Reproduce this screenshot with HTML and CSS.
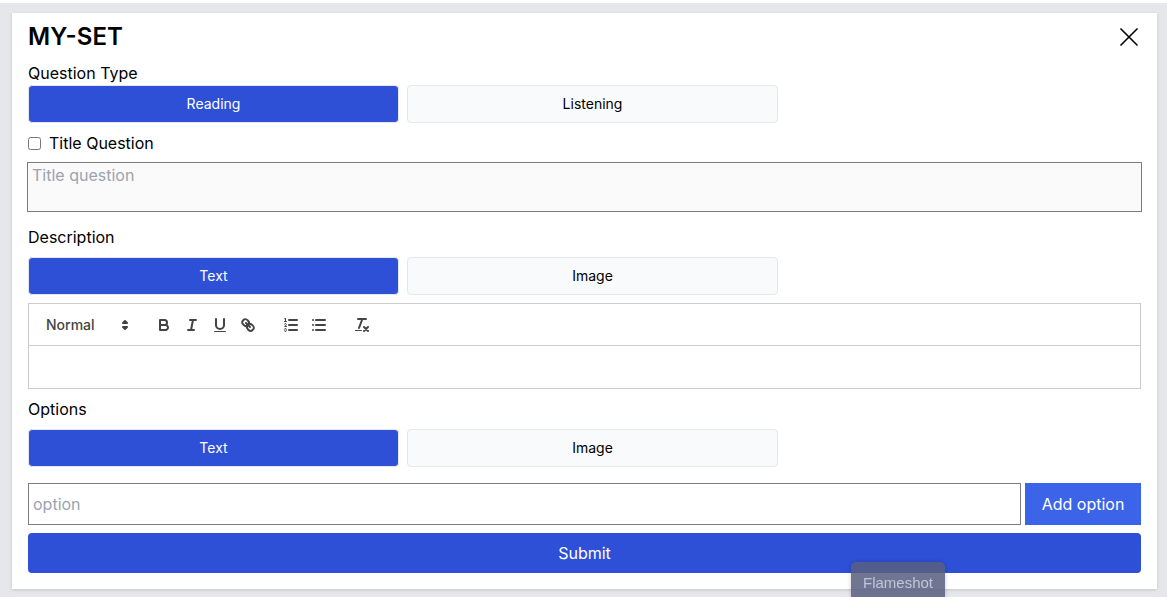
FILE: index.html
```html
<!DOCTYPE html>
<html lang="en">
<head>
<meta charset="utf-8">
<meta name="viewport" content="width=device-width, initial-scale=1">
<title>MY-SET</title>
<link rel="stylesheet" href="styles.css">
</head>
<body>
<main class="page">
  <form class="card">
    <header class="card-header">
      <h1 class="title">MY-SET</h1>
      <button type="button" class="close" aria-label="Close">
        <svg viewBox="0 0 24 24" width="24" height="24"><path d="M3.5 3.5l17 17M20.5 3.5l-17 17"/></svg>
      </button>
    </header>

    <section class="group">
      <h2 class="label">Question Type</h2>
      <div class="choices">
        <button type="button" class="choice choice-active">Reading</button>
        <button type="button" class="choice">Listening</button>
      </div>
    </section>

    <section class="group title-group">
      <label class="check"><input type="checkbox" class="checkbox">Title Question</label>
      <textarea class="title-input" rows="2" placeholder="Title question" aria-label="Title question"></textarea>
    </section>

    <section class="group spaced">
      <h2 class="label">Description</h2>
      <div class="choices">
        <button type="button" class="choice choice-active">Text</button>
        <button type="button" class="choice">Image</button>
      </div>
      <div class="editor">
        <div class="toolbar">
          <div class="picker">
            <select class="picker-select" aria-label="Text style"><option>Normal</option><option>Heading 1</option><option>Heading 2</option></select>
            <svg class="icon picker-arrows" viewBox="0 0 18 18"><path d="M7 11L9 13L11 11ZM7 7L9 5L11 7Z"/></svg>
          </div>
          <div class="tools">
            <button type="button" class="tool" aria-label="Bold"><svg class="icon" viewBox="0 0 18 18"><path d="M5,4H9.5A2.5,2.5,0,0,1,12,6.5v0A2.5,2.5,0,0,1,9.5,9H5Z"/><path d="M5,9h5.5A2.5,2.5,0,0,1,13,11.5v0A2.5,2.5,0,0,1,10.5,14H5Z"/></svg></button>
            <button type="button" class="tool" aria-label="Italic"><svg class="icon" viewBox="0 0 18 18"><path d="M7 4H13M5 14H11M8 14L10 4"/></svg></button>
            <button type="button" class="tool" aria-label="Underline"><svg class="icon" viewBox="0 0 18 18"><path d="M5,3V9a4.012,4.012,0,0,0,4,4H9a4.012,4.012,0,0,0,4-4V3"/><rect class="solid" x="3" y="15" width="12" height="1" rx="0.5"/></svg></button>
            <button type="button" class="tool" aria-label="Link"><svg class="icon" viewBox="0 0 18 18"><path d="M7 7L11 11"/><path d="M8.9,4.577a3.476,3.476,0,0,1,.36,4.679A3.476,3.476,0,0,1,4.577,8.9C3.185,7.5,2.035,6.4,4.217,4.217S7.5,3.185,8.9,4.577Z"/><path d="M13.423,9.1a3.476,3.476,0,0,0-4.679-.36,3.476,3.476,0,0,0,.36,4.679c1.392,1.392,2.5,2.542,4.679.36S14.815,10.5,13.423,9.1Z"/></svg></button>
          </div>
          <div class="tools">
            <button type="button" class="tool" aria-label="Numbered list"><svg class="icon" viewBox="0 0 18 18"><path d="M7 4H15M7 9H15M7 14H15"/><path class="thin" d="M2.5 5.5H4.5"/><path class="solid" d="M3.5,6A0.5,0.5,0,0,1,3,5.5V3.085l-0.276.138A0.5,0.5,0,0,1,2.053,3c-0.124-.247-0.023-0.324.224-0.447l1-.5A0.5,0.5,0,0,1,4,2.5v3A0.5,0.5,0,0,1,3.5,6Z"/><path class="thin" d="M4.5,10.5h-2c0-.234,1.85-1.076,1.85-2.234A0.959,0.959,0,0,0,2.5,8.156"/><path class="thin" d="M2.5,14.846a0.959,0.959,0,0,0,1.85-.109A0.7,0.7,0,0,0,3.75,14a0.688,0.688,0,0,0,.6-0.736,0.959,0.959,0,0,0-1.85-.109"/></svg></button>
            <button type="button" class="tool" aria-label="Bulleted list"><svg class="icon" viewBox="0 0 18 18"><path d="M6 4H15M6 9H15M6 14H15M3 4H3M3 9H3M3 14H3"/></svg></button>
          </div>
          <div class="tools">
            <button type="button" class="tool" aria-label="Clear formatting"><svg class="icon" viewBox="0 0 18 18"><path d="M5 3H13M6 12L9.35 3M11 11L15 15M15 11L11 15"/><rect class="solid" x="2" y="14" width="7" height="1" rx="0.5"/></svg></button>
          </div>
        </div>
        <div class="editor-body" contenteditable="true" role="textbox" aria-label="Description"></div>
      </div>
    </section>

    <section class="group">
      <h2 class="label">Options</h2>
      <div class="choices">
        <button type="button" class="choice choice-active">Text</button>
        <button type="button" class="choice">Image</button>
      </div>
      <div class="option-row">
        <input type="text" class="option-input" placeholder="option" aria-label="Option">
        <button type="button" class="add">Add option</button>
      </div>
    </section>

    <button type="submit" class="submit">Submit</button>
  </form>
</main>
<div class="tooltip" role="tooltip">Flameshot</div>
</body>
</html>
```
FILE: styles.css
```css
* {
  box-sizing: border-box;
  margin: 0;
}

body {
  min-height: 100vh;
  display: flex;
  flex-direction: column;
  padding-top: 3px;
  background: #fff;
  color: #000;
  font: 16px/24px Inter, "Liberation Sans", sans-serif;
}

button,
input,
select,
textarea {
  font: inherit;
  color: inherit;
}

button {
  border: 0;
  padding: 0;
  cursor: pointer;
}

.page {
  flex: 1;
  padding: 10px 10px 8px 12px;
  background: #e5e7eb;
}

.card {
  padding: 8px 16px 16px;
  background: #fff;
  box-shadow: 0 1px 3px rgba(0, 0, 0, 0.15);
}

.card-header {
  display: flex;
  justify-content: space-between;
  align-items: center;
  margin-bottom: 8px;
}

.title {
  font-size: 24px;
  line-height: 32px;
  font-weight: 600;
}

.close {
  display: flex;
  background: none;
}

.close svg {
  fill: none;
  stroke: #000;
  stroke-width: 1.6;
}

.label {
  font-size: 16px;
  font-weight: 400;
}

.choices {
  display: flex;
  gap: 8px;
}

.label + .choices {
  margin-top: 8px;
}

.card-header + .group .choices {
  margin-top: 0;
}

.choice {
  width: calc(100% / 3);
  padding: 8px;
  border: 1px solid #e5e7eb;
  border-radius: 4px;
  background: #f9fafb;
  font-size: 14px;
  line-height: 20px;
}

.choice-active {
  background: #2d50d6;
  color: #fff;
}

.title-group {
  margin-top: 8px;
}

.check {
  display: flex;
  align-items: center;
  gap: 8px;
}

.checkbox {
  width: 13px;
  height: 13px;
}

.title-input {
  display: block;
  width: 100%;
  margin-top: 8px;
  padding: 0 4px;
  border: 0;
  outline: 1px solid #7c7c7c;
  background: #fafafa;
  resize: none;
  overflow: hidden;
}

.title-input::placeholder,
.option-input::placeholder {
  color: #9ca3af;
}

.spaced {
  margin-top: 14px;
}

.editor {
  margin: 8px 0;
  border: 1px solid #ccc;
}

.toolbar {
  display: flex;
  align-items: center;
  gap: 15px;
  padding: 8px;
  border-bottom: 1px solid #ccc;
}

.picker {
  position: relative;
  width: 98px;
}

.picker-select {
  appearance: none;
  display: block;
  width: 100%;
  height: 25px;
  padding: 0 8px;
  border: 1px solid transparent;
  background: none;
  color: #444;
  font-size: 14px;
  font-weight: 500;
}

.picker-arrows {
  position: absolute;
  top: 4px;
  right: 1px;
  pointer-events: none;
}

.tools {
  display: flex;
}

.tool {
  display: flex;
  padding: 3px 5px;
  background: none;
}

.icon {
  width: 18px;
  height: 18px;
  fill: none;
  stroke: #444;
  stroke-width: 2;
  stroke-linecap: round;
  stroke-linejoin: round;
}

.icon .solid {
  fill: #444;
  stroke: none;
}

.icon .thin {
  stroke-width: 1;
}

.editor-body {
  min-height: 42px;
  padding: 12px 15px;
  font-size: 13px;
  line-height: 18px;
}

.option-row {
  display: flex;
  gap: 4px;
  margin: 16px 0 8px;
}

.option-input {
  flex: 1;
  min-width: 0;
  height: 42px;
  padding: 0 4px;
  border: 1px solid #7c7c7c;
  border-radius: 0;
}

.add {
  width: 116px;
  background: #3c64e8;
  color: #fff;
}

.submit {
  display: block;
  width: 100%;
  padding: 8px;
  border-radius: 4px;
  background: #2d50d6;
  color: #fff;
}

.tooltip {
  position: fixed;
  right: 222px;
  bottom: 0;
  width: 94px;
  height: 35px;
  padding-top: 9px;
  border-radius: 5px 5px 0 0;
  background: rgba(88, 96, 128, 0.86);
  box-shadow: 0 0 4px rgba(0, 0, 0, 0.2);
  color: #bfc6da;
  font: 15px/24px "Liberation Sans", Arial, sans-serif;
  text-align: center;
}
```
